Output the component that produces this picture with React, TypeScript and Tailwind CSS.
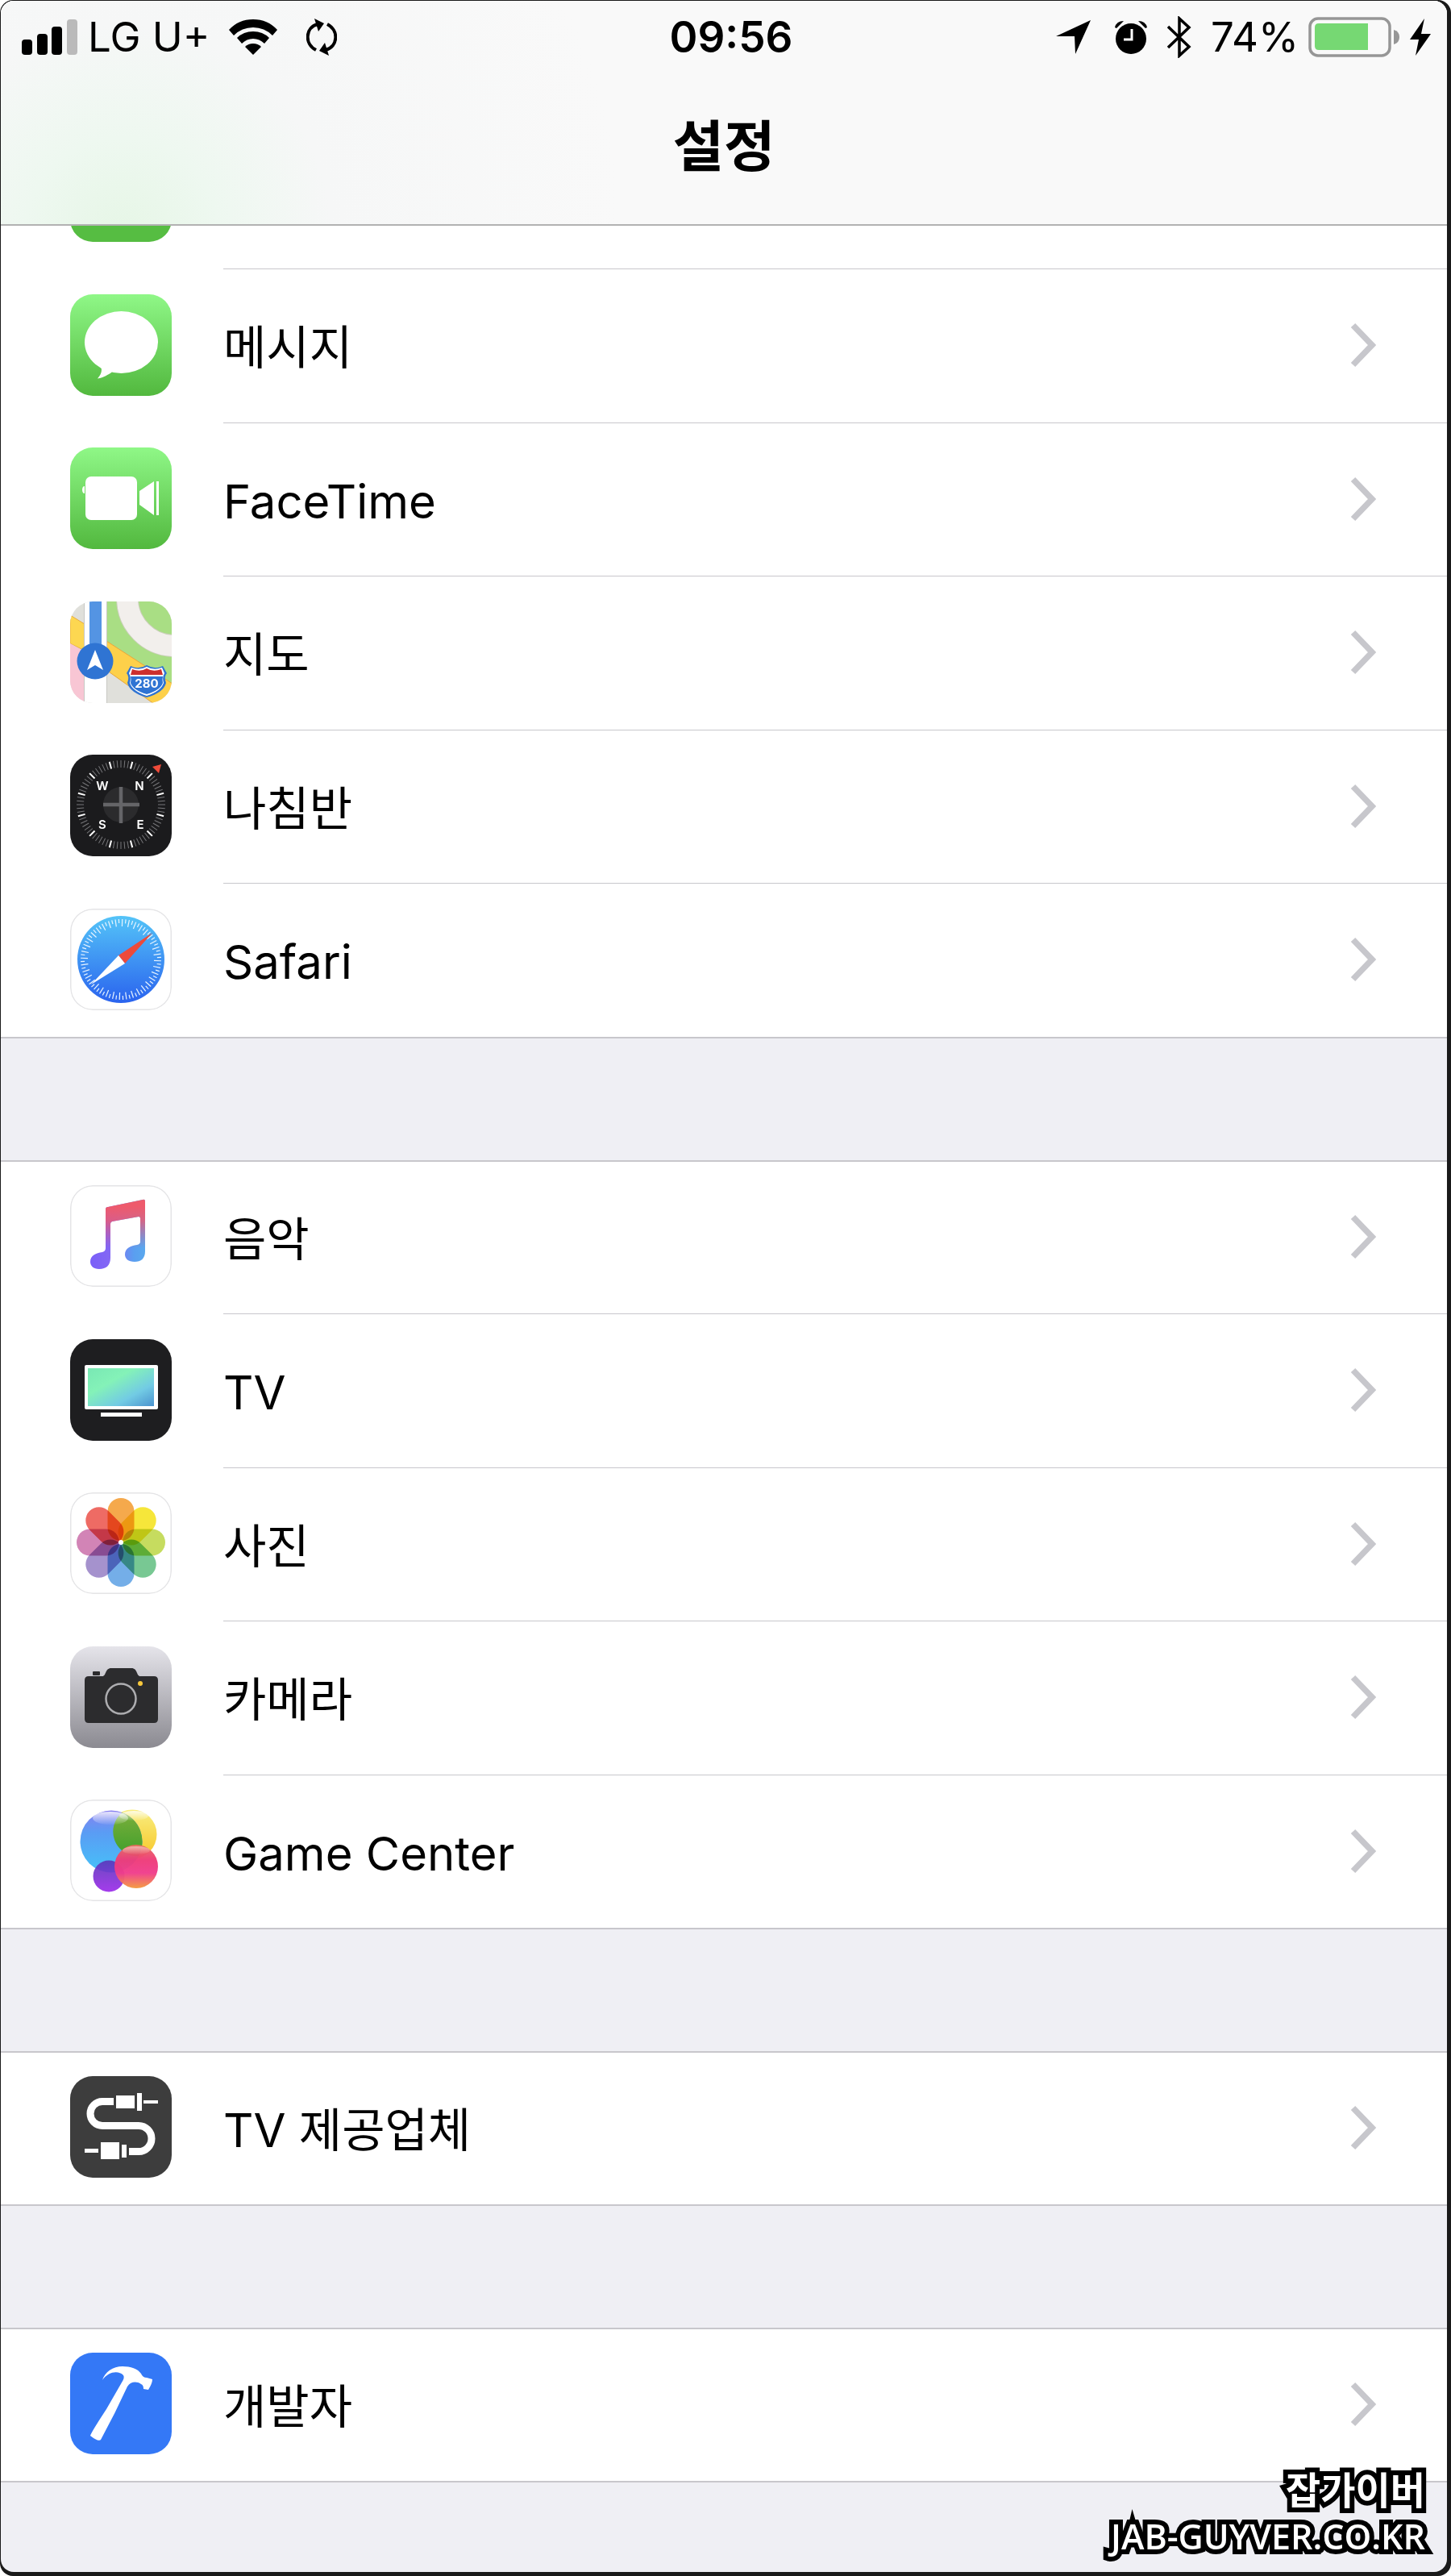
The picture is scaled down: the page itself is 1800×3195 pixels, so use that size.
import type { ReactNode } from "react";

type AppIcon =
  | "phone"
  | "messages"
  | "facetime"
  | "maps"
  | "compass"
  | "safari"
  | "music"
  | "tv"
  | "photos"
  | "camera"
  | "gamecenter"
  | "provider"
  | "developer";

type SettingsRow = { id: AppIcon; label: string };

const GROUPS: SettingsRow[][] = [
  [
    { id: "messages", label: "메시지" },
    { id: "facetime", label: "FaceTime" },
    { id: "maps", label: "지도" },
    { id: "compass", label: "나침반" },
    { id: "safari", label: "Safari" },
  ],
  [
    { id: "music", label: "음악" },
    { id: "tv", label: "TV" },
    { id: "photos", label: "사진" },
    { id: "camera", label: "카메라" },
    { id: "gamecenter", label: "Game Center" },
  ],
  [{ id: "provider", label: "TV 제공업체" }],
  [{ id: "developer", label: "개발자" }],
];

const PETALS = ["#f5a94c", "#f6e63a", "#c6dc5f", "#78c893", "#74aee8", "#a592cd", "#d284b6", "#ee6b64"];

const NOTE =
  "M47 27L90 18Q93 17 93 20V82C93 91 88 95 80 95C72 95 68 91 68 86C68 78 75 75 83 74Q87 73 87 70V41Q87 39 85 39L52 45Q50 46 50 48V90C50 99 45 104 36 104C29 104 25 100 25 95C25 87 32 84 40 83Q44 82 44 78V30Q44 27 47 27z";

const ICONS: Record<AppIcon, ReactNode> = {
  phone: <rect width="126" height="126" fill="#56bd42" />,
  messages: (
    <>
      <rect width="126" height="126" fill="url(#green)" />
      <ellipse cx="63.5" cy="59.5" rx="45.5" ry="38.5" fill="#fff" />
      <path d="M37 88c3 4 3 10-3 16.500c8-1 13-5 18-8z" fill="#fff" />
    </>
  ),
  facetime: (
    <>
      <rect width="126" height="126" fill="url(#green)" />
      <rect x="19" y="36" width="64" height="54" rx="7" fill="#fff" />
      <path d="M18 48c-2 0-3 2-3 4.500s1 4.500 3 4.500zM86 54l18-12v42L86 71z" fill="#fff" />
      <rect x="107" y="42" width="3" height="42" fill="#fff" />
    </>
  ),
  maps: (
    <>
      <rect width="126" height="126" fill="#e0e0db" />
      <path d="M0 17l18 11v33L0 52z" fill="#fdd751" stroke="#e8ab3e" />
      <path d="M0 52l18 10v64H0z" fill="#f8c6d4" />
      <path d="M45 0h81v102L45 49z" fill="#a9de84" />
      <path d="M45 49l82 53v30h-16L45 85z" fill="#fdd04a" stroke="#e8a53a" />
      <circle cx="130" cy="-4" r="59" fill="none" stroke="#c9cfb8" strokeWidth="28" />
      <circle cx="130" cy="-4" r="59" fill="none" stroke="#f2efec" strokeWidth="26" />
      <rect x="18" width="27" height="126" fill="#fff" />
      <path d="M17.500 0v126M45.500 0v126" stroke="#c8c8c4" />
      <rect x="24" width="15" height="66" fill="#5494e3" />
      <circle cx="31" cy="74" r="22.500" fill="#2f74d3" />
      <path d="M31 60l10 25l-10-6l-10 6z" fill="#fff" />
      <path
        d="M75 80q10 5 20-1q10 6 20 1l5 9q-4 4-1 12q-3 12-24 18q-21-6-24-18q3-8-1-12z"
        fill="#2f74d3"
      />
      <path d="M76 82q10 4 19-1q9 5 19 1l3 7q-3 5-1 12q-3 10-21 16q-18-6-21-16q2-7-1-12z" fill="#fff" />
      <path d="M77 84q10 4 18-1q8 5 18 1l2 7H75z" fill="#cc2f2e" />
      <path d="M75 93h40q-1 4 0 8q-3 9-20 14q-17-5-20-14q1-4 0-8z" fill="#2f74d3" />
      <text x="95" y="107" textAnchor="middle" fontSize="15" fontWeight="700" fill="#fff">280</text>
    </>
  ),
  compass: (
    <>
      <rect width="126" height="126" fill="#1b1b1d" />
      {Array.from({ length: 72 }, (_, i) => (
        <path
          key={i}
          d="M63 7v9"
          transform={`rotate(${i * 5} 63 62)`}
          stroke={i % 6 === 3 ? "#fff" : "#77777a"}
          strokeWidth={i % 6 === 3 ? 2 : 1}
        />
      ))}
      <circle cx="63" cy="62" r="22" fill="#2b2b2d" />
      <path d="M41 62h45M63 40v45" stroke="#656568" strokeWidth="4.500" />
      <path d="M102 15l11-3l-3 11z" fill="#f04b3a" />
      <g fill="#fff" fontSize="15" fontWeight="600" textAnchor="middle">
        <text x="40" y="44">W</text>
        <text x="86" y="44">N</text>
        <text x="40" y="92">S</text>
        <text x="87" y="92">E</text>
      </g>
    </>
  ),
  safari: (
    <>
      <WhiteTile />
      <circle cx="63" cy="63" r="54" fill="url(#sky)" />
      {Array.from({ length: 72 }, (_, i) => (
        <path
          key={i}
          d={i % 2 === 0 ? "M63 13v9" : "M63 13v5"}
          transform={`rotate(${i * 5 + 2} 63 63)`}
          stroke="#e8f4ff"
          strokeWidth="1.200"
        />
      ))}
      <path d="M102 30L60 58l8 10z" fill="#ec4a3b" />
      <path d="M26 94l34-36l8 10z" fill="#fff" />
    </>
  ),
  music: (
    <>
      <WhiteTile />
      <path d={NOTE} fill="url(#noteBase)" />
      <path d={NOTE} fill="url(#noteRed)" />
    </>
  ),
  tv: (
    <>
      <rect width="126" height="126" fill="#1e1e20" />
      <rect x="18" y="32" width="91" height="55" rx="2" fill="#fff" />
      <rect x="22" y="36" width="82" height="47" fill="url(#screen)" />
      <rect x="38" y="91" width="51" height="5" fill="#fff" />
    </>
  ),
  photos: (
    <>
      <WhiteTile />
      <g className="isolate">
        {PETALS.map((color, i) => (
          <rect
            key={color}
            x="46.500"
            y="7"
            width="33"
            height="53"
            rx="16.500"
            fill={color}
            transform={`rotate(${i * 45} 63 62)`}
            className="mix-blend-multiply"
          />
        ))}
      </g>
      <circle cx="63" cy="62" r="3" fill="#fff" />
    </>
  ),
  camera: (
    <>
      <rect width="126" height="126" fill="url(#silver)" />
      <path
        d="M23 37h17c5 0 3-10 11-10h25c8 0 6 10 11 10h17q5 0 5 5v48q0 5-5 5H23q-5 0-5-5V42q0-5 5-5z"
        fill="#2c2c2e"
      />
      <rect x="28" y="31" width="9" height="5" rx="1" fill="#2c2c2e" />
      <circle cx="63" cy="65" r="18.500" fill="none" stroke="#adadb0" strokeWidth="2.500" />
      <circle cx="87" cy="46" r="3" fill="#f8c83c" />
    </>
  ),
  gamecenter: (
    <>
      <WhiteTile />
      <circle cx="77" cy="43" r="30.500" fill="url(#gcYellow)" />
      <circle cx="51" cy="52" r="38.500" fill="url(#gcBlue)" />
      <path d="M64.600 16A38.500 38.500 0 0 1 85 70.200A30.500 30.500 0 0 1 64.600 16z" fill="url(#gcGreen)" />
      <ellipse cx="50" cy="23" rx="22" ry="8" fill="url(#shine)" />
      <ellipse cx="79" cy="20" rx="18" ry="6" fill="url(#shine)" />
      <circle cx="48" cy="95" r="19.500" fill="url(#gcPurple)" opacity=".9" />
      <circle cx="82" cy="83" r="27" fill="url(#gcPink)" opacity=".96" />
      <ellipse cx="82" cy="63" rx="17" ry="5" fill="url(#shine)" opacity=".6" />
    </>
  ),
  provider: (
    <>
      <rect width="126" height="126" fill="#3d3d3d" />
      <path
        d="M54 31.500H40a15 15 0 0 0 0 30h45a16 16 0 0 1 0 32H73"
        fill="none"
        stroke="#fff"
        strokeWidth="9"
      />
      <path d="M57 24h23v16H57zM83 21h6v22h-6zM91 30h18v4H91zM18 90h17v5H18zM38 82h23v21H38zM64 85h6v16h-6z" fill="#fff" />
    </>
  ),
  developer: (
    <>
      <rect width="126" height="126" fill="#3478f6" />
      <path
        d="M40 34C43 24 53 17 65 17C75 17 84 20 88 26Q90 31 95 31L102 33Q102 38 97 46L91 45Q91 40 88 39C82 35 75 36 71 42Q56 75 38 108Q35 111 25 103Q26 99 45 70L64 37Q68 31 66 28C60 22 48 23 40 34z"
        fill="#fff"
      />
    </>
  ),
};

function WhiteTile() {
  return <rect x=".75" y=".75" width="124.500" height="124.500" rx="27.500" fill="#fff" stroke="#e4e4e6" strokeWidth="1.500" />;
}

function Tile({ id }: { id: AppIcon }) {
  return (
    <svg viewBox="0 0 126 126" className="size-[126px] shrink-0 rounded-[28px]" aria-hidden="true">
      {ICONS[id]}
    </svg>
  );
}

// Shared paint servers for the app tiles
function Gradients() {
  return (
    <svg className="absolute size-0" aria-hidden="true">
      <defs>
        <Vertical id="green" from="#8ff787" to="#52b83e" />
        <Vertical id="sky" from="#54c4f8" to="#2a63ee" />
        <Vertical id="silver" from="#e5e4ea" to="#8b8a91" />
        <Vertical id="gcYellow" from="#f8ee80" to="#f8c626" />
        <Vertical id="gcGreen" from="#7aae3a" to="#3f9f2c" />
        <Vertical id="gcPurple" from="#5a35b8" to="#9a26ea" />
        <linearGradient id="gcBlue" x2="0" y2="1">
          <stop stopColor="#8a80f0" />
          <stop offset=".35" stopColor="#5a9cf4" />
          <stop offset="1" stopColor="#45c2f8" />
        </linearGradient>
        <linearGradient id="gcPink" x2="0" y2="1">
          <stop stopColor="#e8705c" />
          <stop offset=".35" stopColor="#ee3a78" />
          <stop offset=".65" stopColor="#f03c8c" />
          <stop offset="1" stopColor="#f49a3c" />
        </linearGradient>
        <linearGradient id="shine" x2="0" y2="1">
          <stop stopColor="#fff" stopOpacity=".8" />
          <stop offset="1" stopColor="#fff" stopOpacity=".05" />
        </linearGradient>
        <linearGradient id="noteBase">
          <stop stopColor="#7a5ff8" />
          <stop offset=".4" stopColor="#8468f4" />
          <stop offset=".8" stopColor="#5a9ff0" />
          <stop offset="1" stopColor="#5aa8ee" />
        </linearGradient>
        <linearGradient id="noteRed" x2="0" y2="1">
          <stop offset=".1" stopColor="#ee5a6c" />
          <stop offset=".3" stopColor="#ea5a74" stopOpacity=".85" />
          <stop offset=".7" stopColor="#d85a90" stopOpacity="0" />
        </linearGradient>
        <linearGradient id="screen" x2="1" y2="1">
          <stop stopColor="#79e8b4" />
          <stop offset=".35" stopColor="#84f2b8" />
          <stop offset=".7" stopColor="#72cbe4" />
          <stop offset="1" stopColor="#4b93cf" />
        </linearGradient>
      </defs>
    </svg>
  );
}

function Vertical({ id, from, to }: { id: string; from: string; to: string }) {
  return (
    <linearGradient id={id} x2="0" y2="1">
      <stop stopColor={from} />
      <stop offset="1" stopColor={to} />
    </linearGradient>
  );
}

function StatusBar() {
  return (
    <div className="grid h-[90px] grid-cols-[1fr_auto_1fr] items-center pr-5 pl-[26px] text-[51px] leading-[60px]">
      <div className="flex items-center">
        <svg viewBox="0 0 70 44" className="mr-3 h-[44px] w-[70px]" role="img" aria-label="Signal">
          <rect y="25" width="13" height="19" rx="4" />
          <rect x="19" y="18" width="13" height="26" rx="4" />
          <rect x="37" y="9" width="13" height="35" rx="4" />
          <rect x="56" width="13" height="44" rx="4" fill="#bababa" />
        </svg>
        <span>LG U+</span>
        <svg viewBox="0 0 60 44" className="ml-6 h-[44px] w-[60px]" role="img" aria-label="Wi-Fi">
          <path d="M0 13Q12 0 30 0T60 13L54 20Q44 10 30 10T6 20z" />
          <path d="M10 23Q18 15 30 15T50 23L44 30Q38 24 30 24T16 30z" />
          <path d="M20 34Q24 30 30 30T40 34L30 44z" />
        </svg>
        <svg viewBox="0 0 38 46" className="ml-9 h-[46px] w-[38px]" role="img" aria-label="Syncing">
          <path d="M12 39C-3 31-1 11 14 7M26 7C41 15 39 35 24 39" fill="none" stroke="#000" strokeWidth="4" />
          <path d="M10 0L22 6L15 16zM28 46L16 40L23 30z" />
        </svg>
      </div>
      <time className="pl-3 text-[53px] font-semibold">09:56</time>
      <div className="flex items-center justify-end">
        <svg viewBox="0 0 44 42" className="h-[42px] w-[44px]" role="img" aria-label="Location">
          <path d="M43 0L24 42L23 20L0 20z" />
        </svg>
        <svg viewBox="0 0 42 42" className="ml-7 h-[42px] w-[42px]" role="img" aria-label="Alarm">
          <circle cx="21" cy="23" r="19" />
          <path d="M1 9Q3 1 12 1L3 10zM41 9Q39 1 30 1l9 9z" />
          <path d="M22 11v13H12" fill="none" stroke="#fff" strokeWidth="3" />
        </svg>
        <svg viewBox="0 0 30 52" className="ml-6 h-[52px] w-[30px]" role="img" aria-label="Bluetooth">
          <path d="M1 13l26 25L15 49V3l12 11L1 39" fill="none" stroke="#000" strokeWidth="3.500" />
        </svg>
        <span className="ml-6">74%</span>
        <svg viewBox="0 0 114 50" className="ml-3 h-[50px] w-[114px]" role="img" aria-label="Battery">
          <rect x="2" y="2" width="99" height="46" rx="10" fill="none" stroke="#969696" strokeWidth="3.500" />
          <path d="M13 8h61v33H13q-5 0-5-5V13q0-5 5-5z" fill="#76d873" />
          <path d="M106 16q7 2 7 9t-7 9z" fill="#969696" />
        </svg>
        <svg viewBox="0 0 26 46" className="ml-3 h-[46px] w-[26px]" role="img" aria-label="Charging">
          <path d="M18 0L0 26h11L7 46L26 19H14z" />
        </svg>
      </div>
    </div>
  );
}

function Row({ id, label }: SettingsRow) {
  return (
    <li className="group flex h-[190px] even:h-[191px]">
      <a href={`#${id}`} className="flex flex-1 pl-[86px]">
        <span className="flex items-center pb-0.5">
          <Tile id={id} />
        </span>
        <span className="ml-16 flex flex-1 items-center justify-between border-t border-[#c8c7cc] pr-[88px] pb-0.5 group-first:border-transparent">
          <span className="pt-1.5 text-[58px] leading-[80px]">{label}</span>
          <svg viewBox="0 0 32 56" className="h-[56px] w-[32px]" aria-hidden="true">
            <path d="M3.500 3.500L27 28L3.500 52.500" fill="none" stroke="#c7c7cc" strokeWidth="7.500" />
          </svg>
        </span>
      </a>
    </li>
  );
}

export default function App() {
  return (
    <div className="relative flex min-h-screen flex-col rounded-2xl bg-[#1a1a1a] pt-px pr-[5px] pb-[5px] pl-px font-['Inter','Noto_Sans_CJK_KR',sans-serif] text-black">
      <Gradients />
      <div className="flex flex-1 flex-col overflow-hidden rounded-2xl bg-[#efeff4]">
        <header className="border-b-2 border-[#b2b2b2] bg-[#f9f9f9] bg-[radial-gradient(circle_at_150px_290px,#e6f6e6_0,#eef8f0_120px,#f6f7f7_260px,#f9f9f9_620px)]">
          <StatusBar />
          <h1 className="flex h-[187px] items-center justify-center pb-1 text-[69px] font-bold">설정</h1>
        </header>
        <main className="flex flex-col gap-[151px]">
          {GROUPS.map((rows, i) => (
            <ul
              key={rows[0].id}
              className={`border-b-2 border-[#c8c7cc] bg-white ${i === 0 ? "" : "shadow-[inset_0_2px_0_#c8c7cc]"}`}
            >
              {/* bottom edge of the row scrolled under the header */}
              {i === 0 && (
                <li className="flex h-[53px] items-end overflow-hidden pb-[33px] pl-[86px]">
                  <Tile id="phone" />
                </li>
              )}
              {rows.map((row) => (
                <Row key={row.id} {...row} />
              ))}
            </ul>
          ))}
        </main>
      </div>
      <p className="absolute right-8 bottom-5 text-right font-['Open_Sans','Noto_Sans_CJK_KR',sans-serif] text-[43px] leading-[58px] font-semibold text-white [-webkit-text-stroke:12px_#000] [paint-order:stroke_fill]">
        <span className="block text-[47px]">잡가이버</span>
        <span className="block">JAB-GUYVER.CO.KR</span>
      </p>
    </div>
  );
}
